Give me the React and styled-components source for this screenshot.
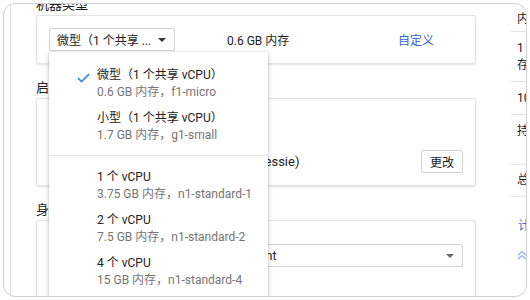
import React from 'react';
import styled, { createGlobalStyle } from 'styled-components';

const GlobalStyle = createGlobalStyle`
  html, body {
    margin: 0;
    padding: 0;
    background: #ffffff;
  }
  body {
    font-family: Roboto, "Noto Sans CJK SC", sans-serif;
    font-size: 12px;
    color: #212121;
  }
`;

const Frame = styled.div`
  margin: 3px;
  width: 524px;
  height: 294px;
  box-sizing: border-box;
  border: 1px solid #cfd1d4;
  border-radius: 12px;
  overflow: hidden;
  display: flex;
  background: #ffffff;
`;

const Rail = styled.div`
  flex: 0 0 6px;
  border-right: 1px solid #dadce0;
`;

const Main = styled.div`
  flex: 0 0 440px;
  padding: 0 35px 0 25px;
  margin-top: -8px;
  display: flex;
  flex-direction: column;
`;

const SectionLabel = styled.div`
  font-size: 13px;
  line-height: 17px;
  margin-bottom: 2px;
  color: #212121;
`;

const Card = styled.div`
  border: 1px solid #e3e3e3;
  border-radius: 2px;
  box-shadow: 0 1px 2px rgba(0, 0, 0, 0.12);
  padding: ${(p) => p.$pad || '12px'};
  margin-bottom: ${(p) => p.$gap || '15px'};
`;

const Row = styled.div`
  display: flex;
  align-items: center;
`;

const DropWrap = styled.div`
  position: relative;
  z-index: 5;
`;

const DropButton = styled.div`
  width: 126px;
  height: 23px;
  box-sizing: border-box;
  border: 1px solid #d2d2d2;
  border-radius: 2px;
  display: flex;
  align-items: center;
  justify-content: space-between;
  padding: 0 8px 0 7px;
  font-size: 12px;
  color: #212121;
  background: #fff;
`;

const Caret = styled.span`
  width: 0;
  height: 0;
  border-left: 4px solid transparent;
  border-right: 4px solid transparent;
  border-top: 4px solid ${(p) => p.$color || '#333'};
`;

const MemText = styled.span`
  margin-left: 52px;
  width: 171px;
  font-size: 12px;
`;

const Link = styled.span`
  color: #3367d6;
  font-size: 12px;
`;

const Menu = styled.div`
  position: absolute;
  top: 24px;
  left: 0;
  width: 219px;
  background: #fff;
  box-shadow: 0 2px 5px rgba(0, 0, 0, 0.22), 0 0 1px rgba(0, 0, 0, 0.25);
  padding: 10px 0 6px;
`;

const MenuItem = styled.div`
  position: relative;
  padding: 5px 0 4px 48px;
  line-height: 17px;
`;

const Check = styled.svg`
  position: absolute;
  left: 28px;
  top: 11px;
`;

const ItemTitle = styled.div`
  font-size: 12px;
  color: #212121;
`;

const ItemSub = styled.div`
  font-size: 12px;
  color: #757575;
`;

const Divider = styled.div`
  height: 1px;
  background: #e5e5e5;
  margin: 7px 0 8px;
`;

const DiskLine = styled.div`
  line-height: 17px;
  font-size: 12px;
  padding-left: 44px;
`;

const DiskRow = styled(Row)`
  margin-top: 5px;
  justify-content: space-between;
`;

const DiskName = styled.span`
  font-size: 13px;
  padding-left: 88px;
`;

const SmallButton = styled.div`
  height: 23px;
  box-sizing: border-box;
  border: 1px solid #d2d2d2;
  border-radius: 2px;
  padding: 0 8px;
  display: flex;
  align-items: center;
  font-size: 12px;
  background: #fff;
`;

const Select = styled.div`
  height: 23px;
  box-sizing: border-box;
  border: 1px solid #d2d2d2;
  border-radius: 2px;
  display: flex;
  align-items: center;
  justify-content: space-between;
  padding: 0 8px 0 11px;
  font-size: 12px;
`;

const Side = styled.div`
  flex: 0 0 200px;
  display: flex;
  flex-direction: column;
`;

const SideRow = styled.div`
  border-bottom: 1px solid #e3e3e3;
  padding: ${(p) => p.$pad || '8px 0 7px 6px'};
  line-height: 17px;
  font-size: 12px;
  white-space: nowrap;
`;

const SideLink = styled.div`
  padding: ${(p) => p.$pad || '0 0 0 6px'};
  color: #3367d6;
  line-height: 17px;
  font-size: 12px;
  white-space: nowrap;
`;

const machines = [
  { title: '微型（1 个共享 vCPU）', sub: '0.6 GB 内存，f1-micro', checked: true },
  { title: '小型（1 个共享 vCPU）', sub: '1.7 GB 内存，g1-small' },
];

const standard = [
  { title: '1 个 vCPU', sub: '3.75 GB 内存，n1-standard-1' },
  { title: '2 个 vCPU', sub: '7.5 GB 内存，n1-standard-2' },
  { title: '4 个 vCPU', sub: '15 GB 内存，n1-standard-4' },
  { title: '8 个 vCPU', sub: '30 GB 内存，n1-standard-8' },
];

const Item = ({ item }) => (
  <MenuItem>
    {item.checked && (
      <Check width="13" height="10" viewBox="0 0 13 10">
        <path d="M1 5.2 L4.6 8.6 L12 1.2" fill="none" stroke="#4285f4" strokeWidth="1.8" />
      </Check>
    )}
    <ItemTitle>{item.title}</ItemTitle>
    <ItemSub>{item.sub}</ItemSub>
  </MenuItem>
);

const App = () => {
  return (
    <>
      <GlobalStyle />
      <Frame>
        <Rail />
        <Main>
          <SectionLabel>机器类型</SectionLabel>
          <Card>
            <Row>
              <DropWrap>
                <DropButton>
                  <span>微型（1 个共享 ...</span>
                  <Caret />
                </DropButton>
                <Menu>
                  {machines.map((m) => (
                    <Item key={m.sub} item={m} />
                  ))}
                  <Divider />
                  {standard.map((m) => (
                    <Item key={m.sub} item={m} />
                  ))}
                </Menu>
              </DropWrap>
              <MemText>0.6 GB 内存</MemText>
              <Link>自定义</Link>
            </Row>
          </Card>

          <SectionLabel>启动磁盘</SectionLabel>
          <Card>
            <DiskLine>新的 10 GB 标准永久性磁盘</DiskLine>
            <DiskLine>映像</DiskLine>
            <DiskRow>
              <DiskName>Debian GNU/Linux 8 (jessie)</DiskName>
              <SmallButton>更改</SmallButton>
            </DiskRow>
          </Card>

          <SectionLabel>身份和 API 访问权限</SectionLabel>
          <Card $pad="23px 12px 40px" $gap="0">
            <Select>
              <span>Compute Engine default service account</span>
              <Caret $color="#666" />
            </Select>
          </Card>
        </Main>
        <Side>
          <SideRow $pad="7px 0 3px 6px">内存</SideRow>
          <SideRow>
            1 个共享 vCPU + 0.6 GB 内
            <br />
            存
          </SideRow>
          <SideRow>10 GB</SideRow>
          <SideRow>
            持久性磁盘
            <br />
            &nbsp;
          </SideRow>
          <SideRow $pad="7px 0 7px 6px">总计</SideRow>
          <SideLink $pad="21px 0 0 7px">计算价格详情</SideLink>
          <SideLink $pad="13px 0 0 6px">
            <svg width="10" height="10" viewBox="0 0 10 10">
              <path d="M1 5 L5 1.5 L9 5 M1 9 L5 5.5 L9 9" fill="none" stroke="#8ab0f0" strokeWidth="1.2" />
            </svg>
          </SideLink>
        </Side>
      </Frame>
    </>
  );
};

export default App;
